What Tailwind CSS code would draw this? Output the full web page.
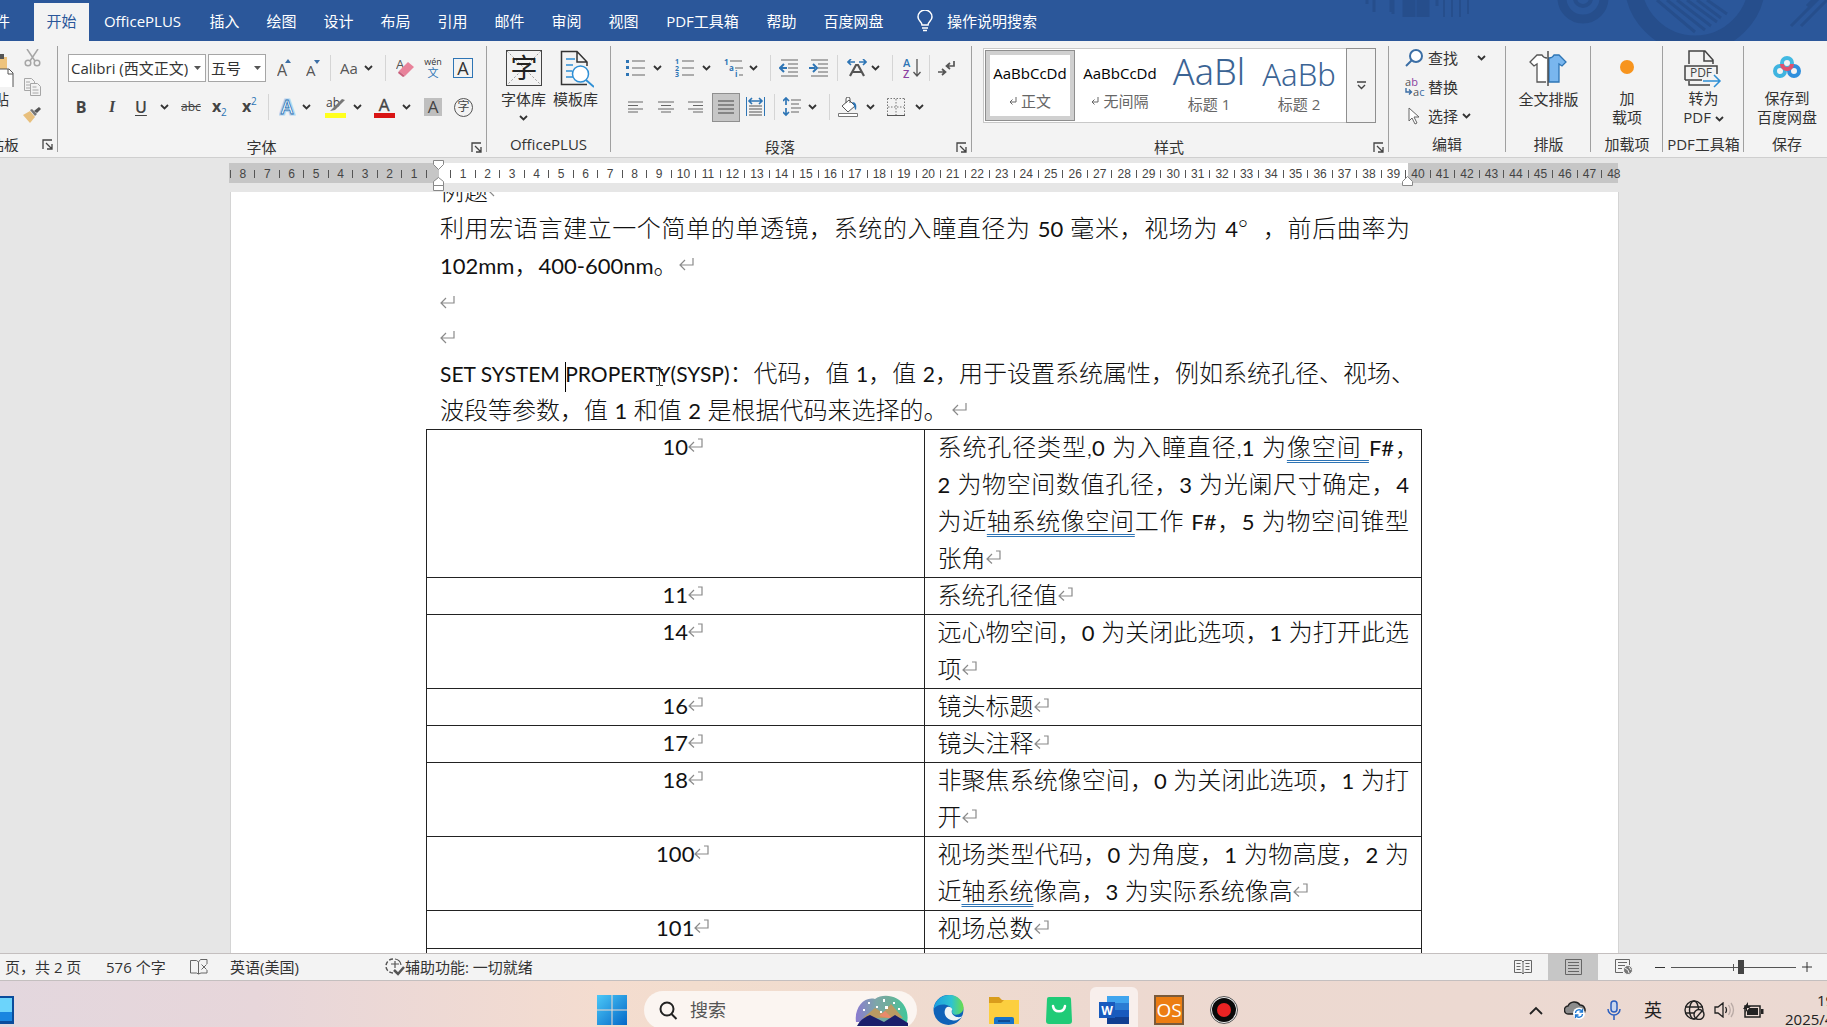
<!DOCTYPE html>
<html lang="zh-CN">
<head>
<meta charset="utf-8">
<title>Word</title>
<script src="https://cdn.jsdelivr.net/npm/@tailwindcss/browser@4"></script>
</head>
<body class="h-screen flex flex-col overflow-hidden bg-[#e6e6e6] font-['Open_Sans','Noto_Sans_CJK_SC',sans-serif] text-[15px] leading-5 text-[#333]">
<svg class="hidden">
  <symbol id="chev" viewBox="0 0 9 6"><path d="M1 1l3.5 3.5L8 1" fill="none" stroke="#333" stroke-width="1.8"/></symbol>
  <symbol id="launch" viewBox="0 0 11 11"><path d="M1 10V1h9M4 4l6 6M10 5v5H5" fill="none" stroke="#444" stroke-width="1.3"/></symbol>
  <symbol id="ret" viewBox="0 0 15 14"><path d="M14 1v7H1M6 3L1 8l5 5" fill="none" stroke="#8a8a8a" stroke-width="1.2"/></symbol>
  <symbol id="cellret" viewBox="0 0 15 14"><path d="M10 1h4v8H1M6 4L1 9l5 4.500" fill="none" stroke="#8a8a8a" stroke-width="1.2"/></symbol>
</svg>

<nav class="relative h-[41px] shrink-0 bg-[#2b579a] text-white flex items-end overflow-hidden">
  <svg class="absolute right-0 top-0" width="520" height="41" fill="none" stroke="#264e8c">
    <circle cx="276" cy="-2" r="21" stroke-width="9"/><circle cx="276" cy="-2" r="8" stroke-width="4"/>
    <circle cx="388" cy="-18" r="62" stroke-width="17"/>
    <path d="M350 0l38 32M360 0l38 30M370 0l34 26M380 0l30 22M390 0l24 18M400 0l20 14" stroke-width="3"/>
    <path d="M67 0v12M60 0v4M130 0v6M84 0v12M86 0v14" stroke-width="3"/><path d="M102 0v17M116 0v17" stroke-width="13"/>
    <path d="M137 0v17M145 0v17M153 0v17M161 0v14" stroke-width="2"/>
    <path d="M484 26l28-28M494 26l28-28M500 6l8-8" stroke-width="3"/>
  </svg>
  <a href="#" class="w-[34px] h-[38px] flex items-center justify-end pr-6 pb-[2px] whitespace-nowrap">文件</a>
  <a href="#" class="h-[38px] w-[55px] pb-[2px] flex items-center justify-center bg-[#f3f3f3] text-[#2b579a]">开始</a>
  <a href="#" class="h-[38px] w-[107px] pb-[2px] flex items-center justify-center">OfficePLUS</a>
  <a href="#" class="h-[38px] w-[57px] pb-[2px] flex items-center justify-center">插入</a>
  <a href="#" class="h-[38px] w-[57px] pb-[2px] flex items-center justify-center">绘图</a>
  <a href="#" class="h-[38px] w-[57px] pb-[2px] flex items-center justify-center">设计</a>
  <a href="#" class="h-[38px] w-[57px] pb-[2px] flex items-center justify-center">布局</a>
  <a href="#" class="h-[38px] w-[57px] pb-[2px] flex items-center justify-center">引用</a>
  <a href="#" class="h-[38px] w-[57px] pb-[2px] flex items-center justify-center">邮件</a>
  <a href="#" class="h-[38px] w-[57px] pb-[2px] flex items-center justify-center">审阅</a>
  <a href="#" class="h-[38px] w-[57px] pb-[2px] flex items-center justify-center">视图</a>
  <a href="#" class="h-[38px] w-[101px] pb-[2px] flex items-center justify-center">PDF工具箱</a>
  <a href="#" class="h-[38px] w-[57px] pb-[2px] flex items-center justify-center">帮助</a>
  <a href="#" class="h-[38px] w-[87px] pb-[2px] flex items-center justify-center">百度网盘</a>
  <a href="#" class="h-[38px] flex items-center pb-[2px] pl-5 gap-[14px]">
    <svg width="16" height="22" viewBox="0 0 16 22" fill="none" stroke="#fff" stroke-width="1.500"><path d="M5 15c0-3-4-4-4-8a7 7 0 0 1 14 0c0 4-4 5-4 8zM5 18h6M6 20.500h4"/></svg>操作说明搜索</a>
</nav>

<section class="h-[117px] shrink-0 bg-[#f3f3f3] border-b border-[#cfcfcf] flex py-[5px]">
  <!-- clipboard -->
  <div class="w-[58px] shrink-0 border-r border-[#a0a0a0] flex flex-col justify-between overflow-hidden">
    <div class="flex justify-between pr-4 pt-[3px]">
      <button class="w-[14px] flex flex-col items-end" aria-label="粘贴">
        <svg width="14" height="38" viewBox="0 0 14 38"><path d="M-8 8h15v24H-8z" fill="#eec37c"/><path d="M-2 5h6v5h-6z" fill="#555"/><path d="M-6 20H9l4 4v15H-6z" fill="#fff" stroke="#555"/><path d="M8 20v5h5" fill="none" stroke="#555"/></svg>
        <span class="mt-[2px] mr-[5px] whitespace-nowrap">粘贴</span>
      </button>
      <div class="flex flex-col items-center gap-[11px]">
        <svg width="17" height="18" viewBox="0 0 17 18" fill="none" stroke="#a6a6a6" stroke-width="1.500"><path d="M3 0l8 12M14 0L6 12"/><circle cx="4" cy="14" r="2.800"/><circle cx="13" cy="14" r="2.800"/></svg>
        <svg width="17" height="18" viewBox="0 0 17 18" fill="#f3f3f3" stroke="#a6a6a6"><path d="M.5.5h7l3 3v9H.5z"/><path d="M6.500 5.500h7l3 3v9h-10z"/><path d="M2 4h4M2 7h4M2 10h4M8.500 9h4M8.500 12h6M8.500 15h6"/></svg>
        <svg width="18" height="16" viewBox="0 0 18 16"><path d="M0 8l7-4 5 6-5 6z" fill="#e8bf7c"/><path d="M7 3l5 6 2-2-5-5z" fill="#777"/><path d="M11 4l5-4 2 2-4 4z" fill="#555"/></svg>
      </div>
    </div>
    <div class="flex items-center justify-between pr-1 h-[15px]"><span class="-ml-[26px] w-[46px] whitespace-nowrap">剪贴板</span><svg width="11" height="11"><use href="#launch"/></svg></div>
  </div>

  <!-- font -->
  <div class="w-[429px] shrink-0 border-r border-[#a0a0a0] flex flex-col">
    <div class="flex items-center h-7 mt-2 pl-[10px]">
      <div class="relative w-[138px] h-7"><select aria-label="字体" class="appearance-none w-full h-full border border-[#a6a6a6] bg-white pl-[2px] pr-[17px] text-[15px] overflow-hidden"><option>Calibri (西文正文)</option></select><svg class="absolute right-[5px] top-[12px]" width="7" height="4"><path d="M0 0h7L3.500 4z" fill="#555"/></svg></div>
      <div class="relative w-[58px] h-7 ml-[2px]"><select aria-label="字号" class="appearance-none w-full h-full border border-[#a6a6a6] bg-white pl-[2px] text-[15px]"><option>五号</option></select><svg class="absolute right-[5px] top-[12px]" width="7" height="4"><path d="M0 0h7L3.500 4z" fill="#555"/></svg></div>
      <button class="ml-[11px] w-[14px]" aria-label="增大字号"><svg width="14" height="18"><text x="0" y="17" font-size="16" fill="#555">A</text><path d="M8 4h6L11 0z" fill="#3b6ea5"/></svg></button>
      <button class="ml-[15px] w-[14px]" aria-label="减小字号"><svg width="14" height="18"><text x="0" y="17" font-size="15" fill="#555">A</text><path d="M8 1h6L11 5z" fill="#3b6ea5"/></svg></button>
      <i class="ml-[10px] w-px h-[26px] bg-[#d5d5d5]"></i>
      <button class="ml-[9px] w-[33px] flex items-center justify-between text-[#555]">Aa<svg width="9" height="6"><use href="#chev"/></svg></button>
      <i class="ml-3 w-px h-[26px] bg-[#d5d5d5]"></i>
      <button class="ml-[10px] w-[18px]" aria-label="清除格式"><svg width="18" height="20"><text x="0" y="11" font-size="13" fill="#555">A</text><path d="M3 13L12 4l6 5-9 9z" fill="#e8829a"/><path d="M3 13l6 5-2 1-5-4z" fill="#c95f7c"/></svg></button>
      <button class="ml-[10px] w-[18px]" aria-label="拼音指南"><svg width="18" height="20" class="overflow-visible"><text x="9" y="7" font-size="9" text-anchor="middle" fill="#333">wén</text><text x="9" y="19" font-size="11" text-anchor="middle" fill="#2e75b5">文</text></svg></button>
      <button class="ml-[11px] w-5 h-5 border border-[#2e75b5] text-[18px] leading-[18px] text-[#333] flex justify-center">A</button>
    </div>
    <div class="flex items-center h-7 mt-[11px] pl-[8px] text-[#444]">
      <button class="w-[30px] font-bold text-[16px]">B</button>
      <button class="w-8 font-bold italic text-[16px] font-['Liberation_Serif',serif]">I</button>
      <button class="ml-[7px] w-[34px] flex items-center justify-between"><span class="underline font-semibold text-[16px] underline-offset-2">U</span><svg width="9" height="6"><use href="#chev"/></svg></button>
      <button class="ml-[11px] w-[22px] line-through text-[12px]">abc</button>
      <button class="ml-[10px] w-4" aria-label="下标"><svg width="16" height="18"><text x="0" y="14" font-size="16" font-weight="700" fill="#444">x</text><text x="9" y="18" font-size="10" fill="#2e75b5">2</text></svg></button>
      <button class="ml-[14px] w-4" aria-label="上标"><svg width="16" height="20"><text x="0" y="15" font-size="16" font-weight="700" fill="#444">x</text><text x="9" y="8" font-size="10" fill="#2e75b5">2</text></svg></button>
      <i class="ml-[10px] w-px h-[26px] bg-[#d5d5d5]"></i>
      <button class="ml-[10px] w-8 flex items-center justify-between" aria-label="文本效果"><svg width="17" height="20"><text x="8" y="17" text-anchor="middle" font-size="19" font-weight="700" fill="#fff" stroke="#b5d5f0" stroke-width="3">A</text><text x="8" y="17" text-anchor="middle" font-size="19" font-weight="600" fill="#fff" stroke="#2e75b5" stroke-width=".8">A</text></svg><svg width="9" height="6"><use href="#chev"/></svg></button>
      <button class="ml-[14px] w-[37px] flex items-center justify-between" aria-label="突出显示"><svg width="21" height="21" class="overflow-visible"><text x="1" y="10" font-size="12" fill="#444">ab</text><path d="M5 14l3-3 9-9 3 1-10 10z" fill="#777"/><path d="M0 16h21v5H0z" fill="#ffff1e"/></svg><svg width="9" height="6"><use href="#chev"/></svg></button>
      <button class="ml-3 w-[37px] flex items-center justify-between" aria-label="字体颜色"><svg width="21" height="21" class="overflow-visible"><text x="10" y="14" text-anchor="middle" font-size="17" fill="#444" stroke="#444" stroke-width=".4">A</text><path d="M0 16h21v5H0z" fill="#d91414"/></svg><svg width="9" height="6"><use href="#chev"/></svg></button>
      <button class="ml-[13px] w-[18px] h-[18px] bg-[#bfbfbf] text-[17px] leading-[18px]">A</button>
      <button class="ml-3 w-[19px] h-[19px] rounded-full border border-[#555] text-[12px] leading-[16px]">字</button>
    </div>
    <div class="mt-auto grid grid-cols-[1fr_auto_1fr] items-center pr-1 -ml-[17px] h-[15px]"><i></i><span>字体</span><svg class="justify-self-end" width="11" height="11"><use href="#launch"/></svg></div>
  </div>

  <!-- OfficePLUS -->
  <div class="w-[124px] shrink-0 border-r border-[#a0a0a0] flex flex-col items-center">
    <div class="flex gap-[6px] pt-1 pl-[2px]">
      <button class="flex flex-col items-center w-[46px]"><svg width="36" height="36"><rect x=".5" y=".5" width="35" height="35" fill="none" stroke="#444"/><path d="M1 1l34 34M35 1L1 35" stroke="#999" stroke-dasharray="2 2"/><text x="18" y="28" text-anchor="middle" font-size="27" fill="#222">字</text></svg><span class="mt-[3px] leading-5">字体库</span><svg class="mt-[6px]" width="9" height="6"><use href="#chev"/></svg></button>
      <button class="flex flex-col items-center w-[46px]"><svg width="36" height="38" viewBox="0 0 36 38" fill="none"><path d="M29 34.500H3.500v-33H19L29 12v4M19 1.500V12h10" stroke="#333" stroke-width="1.500"/><path d="M8 9h9M8 15h7M8 21h6M8 27h7" stroke="#2e8fd5" stroke-width="1.400"/><circle cx="22.500" cy="24" r="8" fill="#fff" stroke="#2e8fd5" stroke-width="1.500"/><path d="M28 30l8 7" stroke="#2e8fd5" stroke-width="1.800"/></svg><span class="mt-px leading-5">模板库</span></button>
    </div>
    <span class="mt-auto leading-[15px]">OfficePLUS</span>
  </div>

  <!-- paragraph -->
  <div class="w-[361px] shrink-0 border-r border-[#a0a0a0] flex flex-col">
    <div class="flex items-center h-7 mt-2 pl-[15px]">
      <button class="w-9 flex items-center justify-between" aria-label="项目符号"><svg width="19" height="18"><path d="M6 2h13M6 9h13M6 16h13" stroke="#666" stroke-width="1.200"/><path d="M0 1h3v3H0zM0 7h3v3H0zM0 14h3v3H0z" fill="#2e75b5"/></svg><svg width="9" height="6"><use href="#chev"/></svg></button>
      <button class="ml-[13px] w-9 flex items-center justify-between" aria-label="编号"><svg width="19" height="18"><path d="M7 2h12M7 9h12M7 16h12" stroke="#666" stroke-width="1.200"/><g font-size="7" font-weight="700" fill="#2e75b5"><text x="0" y="5">1</text><text x="0" y="12">2</text><text x="0" y="18">3</text></g></svg><svg width="9" height="6"><use href="#chev"/></svg></button>
      <button class="ml-[13px] w-[34px] flex items-center justify-between" aria-label="多级列表"><svg width="20" height="18"><path d="M6 2h12M11 9h8M15 16h4" stroke="#666" stroke-width="1.200"/><g font-size="8" font-weight="700" fill="#2e75b5"><text x="0" y="6">1</text><text x="5" y="12">a</text><text x="11" y="18">i</text></g></svg><svg width="9" height="6"><use href="#chev"/></svg></button>
      <i class="ml-3 w-px h-[26px] bg-[#d5d5d5]"></i>
      <button class="ml-[8px]" aria-label="减少缩进"><svg width="19" height="18"><path d="M2 1h17M9 5h10M9 9h10M9 13h10M2 17h17" stroke="#666" stroke-width="1.200"/><path d="M8 9H2M5 5L1 9l4 4" stroke="#2e75b5" stroke-width="2" fill="none"/></svg></button>
      <button class="ml-[11px]" aria-label="增加缩进"><svg width="19" height="18"><path d="M2 1h17M9 5h10M9 9h10M9 13h10M2 17h17" stroke="#666" stroke-width="1.200"/><path d="M0 9h6M4 5l4 4-4 4" stroke="#2e75b5" stroke-width="2" fill="none"/></svg></button>
      <i class="ml-[9px] w-px h-[26px] bg-[#d5d5d5]"></i>
      <button class="ml-[9px] w-[33px] flex items-center justify-between" aria-label="中文版式"><svg width="20" height="18"><path d="M1 3h7M4 0L1 3l3 3M12 3h7M16 0l3 3-3 3" stroke="#2e75b5" stroke-width="1.600" fill="none"/><path d="M3 17L9 6h2l6 11M6 13h8" stroke="#555" stroke-width="2.200" fill="none"/></svg><svg width="9" height="6"><use href="#chev"/></svg></button>
      <i class="ml-3 w-px h-[26px] bg-[#d5d5d5]"></i>
      <button class="ml-[10px]" aria-label="排序"><svg width="18" height="20"><text x="0" y="9" font-size="11" font-weight="600" fill="#2e75b5">A</text><text x="0" y="20" font-size="11" font-weight="600" fill="#8a3fa0">Z</text><path d="M14 1v17M10.500 14l3.500 4 3.500-4" stroke="#555" stroke-width="1.300" fill="none"/></svg></button>
      <i class="ml-[8px] w-px h-[26px] bg-[#d5d5d5]"></i>
      <button class="ml-[8px]" aria-label="显示编辑标记"><svg width="17" height="16" fill="none" stroke="#555" stroke-width="1.700"><path d="M16 1v5H9M12 3L8.500 6 12 9M0 12h7M4 9l3.500 3L4 15"/></svg></button>
    </div>
    <div class="flex items-center h-7 mt-[11px] pl-[17px]">
      <button aria-label="左对齐"><svg width="15" height="12" stroke="#666" stroke-width="1.200"><path d="M0 1h15M0 4.500h10M0 8h15M0 11h10"/></svg></button>
      <button class="ml-[15px]" aria-label="居中"><svg width="16" height="12" stroke="#666" stroke-width="1.200"><path d="M0 1h16M3 4.500h10M0 8h16M3 11h10"/></svg></button>
      <button class="ml-[14px]" aria-label="右对齐"><svg width="15" height="12" stroke="#666" stroke-width="1.200"><path d="M0 1h15M5 4.500h10M0 8h15M5 11h10"/></svg></button>
      <button class="ml-[9px] w-7 h-[29px] bg-[#c6c6c6] border border-[#8f8f8f] flex items-center justify-center" aria-label="两端对齐"><svg width="16" height="14" stroke="#444" stroke-width="1.200"><path d="M0 1h16M0 5h16M0 9h16M0 13h16"/></svg></button>
      <button class="ml-[6px]" aria-label="分散对齐"><svg width="19" height="20"><path d="M.5 0v19M18.500 0v19" stroke="#2e75b5"/><path d="M3 4h13M6 1L3 4l3 3M13 1l3 3-3 3" stroke="#2e75b5" stroke-width="1.600" fill="none"/><path d="M3 9h13M3 12h13M3 15h13M3 18h13" stroke="#555" stroke-width="1.200"/></svg></button>
      <i class="ml-[9px] w-px h-[26px] bg-[#d5d5d5]"></i>
      <button class="ml-[8px] w-[34px] flex items-center justify-between" aria-label="行距"><svg width="18" height="20"><path d="M8 3h10M8 7h8M8 11h10M8 15h8" stroke="#666" stroke-width="1.200"/><path d="M3 2v6M0 4l3-3 3 3M3 11v7M0 15l3 3 3-3" stroke="#2e75b5" stroke-width="1.700" fill="none"/></svg><svg width="9" height="6"><use href="#chev"/></svg></button>
      <i class="ml-3 w-px h-[26px] bg-[#d5d5d5]"></i>
      <button class="ml-[8px] w-[37px] flex items-center justify-between" aria-label="底纹"><svg width="20" height="20"><path d="M4 9l7-6 6 6-7 6zM8 6V2a2 2 0 0 1 4 0v4" fill="#fff" stroke="#555"/><path d="M14 5c4 0 5 3 4 8-2-1-1-4-4-8z" fill="#2e75b5"/><path d="M.5 16.500h19v3H.5z" fill="#fff" stroke="#777"/></svg><svg width="9" height="6"><use href="#chev"/></svg></button>
      <button class="ml-[12px] w-[37px] flex items-center justify-between" aria-label="边框"><svg width="18" height="18" stroke="#777" fill="none"><path d="M.5.5h17M17.500.5v17M.5.5v17M9 1v16M1 9h16" stroke-dasharray="1.500 1.500"/><path d="M0 17.500h18" stroke="#555"/></svg><svg width="9" height="6"><use href="#chev"/></svg></button>
    </div>
    <div class="mt-auto grid grid-cols-[1fr_auto_1fr] items-center pr-1 -ml-[18px] h-[15px]"><i></i><span>段落</span><svg class="justify-self-end" width="11" height="11"><use href="#launch"/></svg></div>
  </div>

  <!-- styles -->
  <div class="flex-1 min-w-0 border-r border-[#a0a0a0] flex flex-col">
    <div class="mt-[2px] ml-[11px] mr-3 h-[75px] border border-[#c8c8c8] bg-white flex">
      <button class="m-px w-[90px] shrink-0 border border-[#8f8f8f] bg-[#d0d0d0] p-1"><span class="bg-white h-full flex flex-col items-center justify-center gap-2 pt-[2px]"><span class="text-[15px] leading-5 text-black">AaBbCcDd</span><span class="text-[#666] leading-5 flex items-center gap-1"><svg width="8" height="8" fill="none" stroke="#666"><path d="M7 0v5H1M3.500 2.500L1 5l2.500 2.500"/></svg>正文</span></span></button>
      <button class="w-[88px] shrink-0 flex flex-col items-center justify-center gap-2 pt-[2px]"><span class="text-[15px] leading-5 text-black">AaBbCcDd</span><span class="text-[#666] leading-5 flex items-center gap-1"><svg width="8" height="8" fill="none" stroke="#666"><path d="M7 0v5H1M3.500 2.500L1 5l2.500 2.500"/></svg>无间隔</span></button>
      <button class="w-[90px] flex flex-col items-center justify-end pb-2 gap-1"><span class="w-[77px] overflow-hidden whitespace-nowrap text-[36px] leading-9 -mt-2 text-[#3b6494] font-['Noto_Sans',sans-serif] font-light">AaBl</span><span class="text-[#666] leading-5">标题 1</span></button>
      <button class="w-[90px] flex flex-col items-center justify-end pb-2 gap-1"><span class="w-[76px] whitespace-nowrap text-[31px] leading-8 text-[#3b6494] font-['Noto_Sans',sans-serif] font-light">AaBb</span><span class="text-[#666] leading-5">标题 2</span></button>
      <button class="ml-auto -my-px -mr-px w-[30px] border border-[#8f8f8f] bg-[#f3f3f3] flex items-center justify-center" aria-label="更多样式"><svg width="9" height="9" fill="none" stroke="#444" stroke-width="1.400"><path d="M0 1h9M1 4l3.500 3.500L8 4"/></svg></button>
    </div>
    <div class="mt-auto grid grid-cols-[1fr_auto_1fr] items-center pr-1 -ml-[18px] h-[15px]"><i></i><span>样式</span><svg class="justify-self-end" width="11" height="11"><use href="#launch"/></svg></div>
  </div>

  <!-- editing -->
  <div class="w-[117px] shrink-0 border-r border-[#a0a0a0] flex flex-col">
    <div class="flex flex-col gap-[9px] pl-4 pt-[2px]">
      <button class="flex items-center h-5"><svg width="18" height="18" fill="#fff" stroke="#3b6ea5" stroke-width="2"><path d="M1 17l6-6"/><circle cx="11" cy="7" r="6"/></svg><span class="ml-[5px]">查找</span><svg class="ml-[19px]" width="9" height="6"><use href="#chev"/></svg></button>
      <button class="flex items-center h-5"><svg width="19" height="19" class="overflow-visible"><text x="0" y="8" font-size="11" fill="#555">a<tspan fill="#8a3fa0">b</tspan></text><text x="8" y="18" font-size="11" fill="#555">a<tspan fill="#3b6ea5">c</tspan></text><path d="M1 10v4h5M4 11.500l2.500 2.500L4 16.500" fill="none" stroke="#3b6ea5" stroke-width="1.400"/></svg><span class="ml-1">替换</span></button>
      <button class="flex items-center h-5"><svg width="18" height="18" fill="#fff" stroke="#666"><path d="M4 1v13l3-3 3 6 2-1-3-6h5z"/></svg><span class="ml-[5px]">选择</span><svg class="ml-1" width="9" height="6"><use href="#chev"/></svg></button>
    </div>
    <span class="mt-auto text-center leading-[15px]">编辑</span>
  </div>

  <!-- typesetting -->
  <div class="w-[85px] shrink-0 border-r border-[#a0a0a0] flex flex-col items-center pl-px">
    <button class="flex flex-col items-center pt-1"><svg width="38" height="36" viewBox="0 0 38 36" stroke-width="1.300"><path d="M18 8c-3 0-4-1-5-3L8 5 1 12l4 4 3-2v18h9" fill="#fff" stroke="#555"/><path d="M20 8c3 0 4-1 5-3l5 0 7 7-4 4-3-2v18H20z" fill="#79b6ee" stroke="#2e75b5"/><path d="M19 1v35" stroke="#333"/></svg><span class="mt-[3px]">全文排版</span></button>
    <span class="mt-auto leading-[15px]">排版</span>
  </div>
  <!-- add-ins -->
  <div class="w-[72px] shrink-0 border-r border-[#a0a0a0] flex flex-col items-center pl-px">
    <button class="flex flex-col items-center pt-[14px]"><i class="w-[14px] h-[14px] rounded-full bg-[#f7941d]"></i><span class="mt-[15px] leading-[19px]">加<br>载项</span></button>
    <span class="mt-auto leading-[15px]">加载项</span>
  </div>
  <!-- PDF -->
  <div class="w-[81px] shrink-0 border-r border-[#a0a0a0] flex flex-col items-center pl-px">
    <button class="flex flex-col items-center pt-1"><svg width="38" height="38" viewBox="0 0 38 38" fill="none" stroke="#444" stroke-width="1.500"><path d="M5 14V1h16l8 9v4M20 1v10h9M1 30V16h32v8M1 30h17M5 31v4h21"/><text x="17" y="27" text-anchor="middle" font-size="12" fill="#444" stroke="none">PDF</text><path d="M19 31h17M30 25l6 6-6 6" stroke="#2e8fd5"/></svg><span class="mt-px leading-[19px]">转为<br>PDF <svg class="inline" width="9" height="6"><use href="#chev"/></svg></span></button>
    <span class="mt-auto leading-[15px]">PDF工具箱</span>
  </div>
  <!-- netdisk -->
  <div class="w-[83px] shrink-0 flex flex-col items-center pl-[3px]">
    <button class="flex flex-col items-center pt-[10px]"><svg width="28" height="23" viewBox="0 0 28 23" fill="none" stroke-width="4"><circle cx="7" cy="15" r="5" stroke="#3fb4e0"/><circle cx="21" cy="15" r="5" stroke="#2f8fdd"/><circle cx="14" cy="7" r="5" stroke="#42b9e2"/><path d="M9 8a5 5 0 0 0 10 0" stroke="#e0526e"/></svg><span class="mt-[10px] leading-[19px]">保存到<br>百度网盘</span></button>
    <span class="mt-auto leading-[15px]">保存</span>
  </div>
</section>

<!-- ruler -->
<div class="relative h-[34px] shrink-0 grid pt-[5px] pb-[9px]">
  <div class="col-start-1 row-start-1 flex pl-[229px] pr-[209px]"><i class="w-[210px] bg-[#c6c6c6]"></i><i class="flex-1 bg-white"></i><i class="w-[210px] bg-[#c6c6c6]"></i></div>
  <div id="ruler" class="col-start-1 row-start-1 flex items-center pt-[2px] pl-[230px] pr-[201px] text-[12px] leading-4 text-[#444] font-['Liberation_Sans',sans-serif]"></div>
  <svg class="absolute left-[433px] top-[2px]" width="12" height="32" fill="#fff" stroke="#888"><path d="M.5.5h10v4l-5 5-5-5zM5.500 17.500l5 4v4H.5v-4zM.5 25.500h10v5H.5z"/></svg>
  <svg class="absolute right-[413px] top-[18px]" width="12" height="11" fill="#fff" stroke="#888"><path d="M5.500.5l5 5v4H.5v-4z"/></svg>
</div>

<!-- document -->
<main class="flex-1 min-h-0 overflow-hidden pl-[230px] pr-[208px]">
  <article class="h-full overflow-hidden bg-white pl-[210px] pr-[209px] border-l border-r border-[#d4d4d4] text-[24px] leading-[35px] text-[#111] font-light font-['Lato','Noto_Sans_CJK_SC',sans-serif]">
    <div class="-mt-[19px] -ml-px -mr-px">
      <p class="h-[37px]">例题<svg class="inline align-[3px]" width="15" height="14"><use href="#ret"/></svg></p>
      <p class="h-[37px] whitespace-nowrap [text-align-last:justify]">利用宏语言建立一个简单的单透镜，系统的入瞳直径为 <span class="text-[22px] font-normal">50</span> 毫米，视场为 <span class="text-[22px] font-normal">4</span><span class="mr-2">°</span> ，前后曲率为</p>
      <p class="h-[37px]"><span class="text-[22px] font-normal">102mm</span>，<span class="text-[22px] font-normal">400-600nm</span>。<svg class="inline align-[3px] ml-px" width="15" height="14"><use href="#ret"/></svg></p>
      <p class="h-[35px] flex items-center"><svg width="15" height="14"><use href="#ret"/></svg></p>
      <p class="h-[36px] flex items-center"><svg width="15" height="14"><use href="#ret"/></svg></p>
      <p class="h-[37px] whitespace-nowrap relative"><span class="text-[21px] font-normal">SET SYSTEM <i class="inline-block w-px h-[30px] -mr-px bg-black align-middle"></i>PROPERTY(SYSP)</span>：代码，值 <span class="text-[21px] font-normal">1</span>，值 <span class="text-[21px] font-normal">2</span>，用于设置系统属性，例如系统孔径、视场、<svg class="absolute left-[215px] top-[14px]" width="9" height="17" fill="none" stroke="#333"><path d="M1 .5h3l.5 1 .5-1h3M4.500 1v15M1 16.500h3l.5-1 .5 1h3"/></svg></p>
      <p class="h-[37px]">波段等参数，值 <span class="text-[22px] font-normal">1</span> 和值 <span class="text-[22px] font-normal">2</span> 是根据代码来选择的。<svg class="inline align-[3px] ml-1" width="15" height="14"><use href="#ret"/></svg></p>
      <table class="-ml-[14px] w-[calc(100%+26px)] table-fixed border-separate border-spacing-0 border-l border-[#222] [&_td]:align-top [&_td]:p-0 [&_td]:border-r [&_td]:border-[#222] [&_td]:shadow-[inset_0_1px_0_#222] [&_td:first-child]:text-center [&_td:first-child]:text-[22px] [&_td:first-child]:font-normal [&_td:last-child]:pl-[13px] [&_td:last-child]:pr-3 [&_p]:whitespace-nowrap [&_p]:h-[37px]">
        <tr><td>10<svg class="inline align-[3px] -mr-[15px]" width="15" height="14"><use href="#cellret"/></svg></td><td>
          <p class="[text-align-last:justify] -mr-[10px]">系统孔径类型,<span class="text-[22px] font-normal">0</span> 为入瞳直径,<span class="text-[22px] font-normal">1</span> 为<span class="underline decoration-double decoration-1 decoration-[#2e74b5] underline-offset-4">像空间 </span><span class="text-[22px] font-normal">F#</span>，</p>
          <p class="[text-align-last:justify]"><span class="text-[22px] font-normal">2</span> 为物空间数值孔径，<span class="text-[22px] font-normal">3</span> 为光阑尺寸确定，<span class="text-[22px] font-normal">4</span></p>
          <p class="[text-align-last:justify]">为近<span class="underline decoration-double decoration-1 decoration-[#2e74b5] underline-offset-4">轴系统像空间</span>工作 <span class="text-[22px] font-normal">F#</span>，<span class="text-[22px] font-normal">5</span> 为物空间锥型</p>
          <p>张角<svg class="inline align-[3px]" width="15" height="14"><use href="#cellret"/></svg></p></td></tr>
        <tr><td>11<svg class="inline align-[3px] -mr-[15px]" width="15" height="14"><use href="#cellret"/></svg></td><td><p>系统孔径值<svg class="inline align-[3px]" width="15" height="14"><use href="#cellret"/></svg></p></td></tr>
        <tr><td>14<svg class="inline align-[3px] -mr-[15px]" width="15" height="14"><use href="#cellret"/></svg></td><td>
          <p class="[text-align-last:justify]">远心物空间，<span class="text-[22px] font-normal">0</span> 为关闭此选项，<span class="text-[22px] font-normal">1</span> 为打开此选</p>
          <p>项<svg class="inline align-[3px]" width="15" height="14"><use href="#cellret"/></svg></p></td></tr>
        <tr><td>16<svg class="inline align-[3px] -mr-[15px]" width="15" height="14"><use href="#cellret"/></svg></td><td><p>镜头标题<svg class="inline align-[3px]" width="15" height="14"><use href="#cellret"/></svg></p></td></tr>
        <tr><td>17<svg class="inline align-[3px] -mr-[15px]" width="15" height="14"><use href="#cellret"/></svg></td><td><p>镜头注释<svg class="inline align-[3px]" width="15" height="14"><use href="#cellret"/></svg></p></td></tr>
        <tr><td>18<svg class="inline align-[3px] -mr-[15px]" width="15" height="14"><use href="#cellret"/></svg></td><td>
          <p class="[text-align-last:justify]">非聚焦系统像空间，<span class="text-[22px] font-normal">0</span> 为关闭此选项，<span class="text-[22px] font-normal">1</span> 为打</p>
          <p>开<svg class="inline align-[3px]" width="15" height="14"><use href="#cellret"/></svg></p></td></tr>
        <tr><td>100<svg class="inline align-[3px] -mr-[15px]" width="15" height="14"><use href="#cellret"/></svg></td><td>
          <p class="[text-align-last:justify]">视场类型代码，<span class="text-[22px] font-normal">0</span> 为角度，<span class="text-[22px] font-normal">1</span> 为物高度，<span class="text-[22px] font-normal">2</span> 为</p>
          <p>近<span class="underline decoration-double decoration-1 decoration-[#2e74b5] underline-offset-4">轴系统</span>像高，<span class="text-[22px] font-normal">3</span> 为实际系统像高<svg class="inline align-[3px]" width="15" height="14"><use href="#cellret"/></svg></p></td></tr>
        <tr class="h-[38px]"><td>101<svg class="inline align-[3px] -mr-[15px]" width="15" height="14"><use href="#cellret"/></svg></td><td><p>视场总数<svg class="inline align-[3px]" width="15" height="14"><use href="#cellret"/></svg></p></td></tr>
        <tr class="h-[37px]"><td></td><td></td></tr>
      </table>
    </div>
  </article>
</main>

<!-- status bar -->
<footer class="h-7 shrink-0 border-t border-b border-[#c4bfbf] bg-[#f3f3f3] flex items-center whitespace-nowrap">
  <span class="pl-[5px] w-[106px]">页，共 2 页</span>
  <span class="w-[84px]">576 个字</span>
  <svg width="18" height="16" viewBox="0 0 18 16" fill="none" stroke="#666"><path d="M.5 1.500h6l2 1.500v12l-2-1H.5zM8.500 3l2-2.500h6.500V5M17 11v3h-6l-2.500 1M11.500 5.500l5 5M16.500 5.500l-5 5"/></svg>
  <span class="ml-[22px] w-[155px]">英语(美国)</span>
  <svg width="20" height="18" viewBox="0 0 20 18" fill="none" stroke="#555" stroke-width="1.500"><path d="M8 1a7 7 0 0 0 0 14" stroke-dasharray="4 2"/><path d="M10 1a7 7 0 0 1 6 6M6 6h8M10 3v7" stroke-width="1.200"/><path d="M9 12l4 4 6-7" stroke-width="2.500"/></svg>
  <span>辅助功能: 一切就绪</span>
  <div class="ml-auto h-full flex items-center">
    <svg class="mr-4" width="18" height="16" viewBox="0 0 18 16" fill="none" stroke="#666"><path d="M.5 1.500h7L9 3l1.500-1.500h7v12h-7L9 15l-1.500-1.500h-7zM9 3v12M2.500 4.500h4M2.500 7.500h4M2.500 10.500h4M11.500 4.500h4M11.500 7.500h4M11.500 10.500h4"/></svg>
    <button class="w-[50px] h-full bg-[#c6c6c6] flex items-center justify-center" aria-label="页面视图"><svg width="17" height="16" fill="none" stroke="#666"><path d="M.5.5h16v15H.5zM3 3.500h11M3 6.500h11M3 9.500h11M3 12.500h11"/></svg></button>
    <svg class="ml-[17px] mr-[22px]" width="18" height="16" viewBox="0 0 18 16" fill="none" stroke="#666"><path d="M8 13.500H.5V.5h14V6M3 3.500h9M3 6.500h7M3 9.500h4"/><circle cx="13" cy="11" r="4.500" fill="#777" stroke="#f3f3f3"/><path d="M10 9l3 2 1 3M14 8l2 3" stroke="#eee"/></svg>
    <button class="w-[10px] h-5 flex items-center" aria-label="缩小"><i class="w-[10px] h-px bg-[#333]"></i></button>
    <div class="relative ml-[6px] w-[125px] h-4 flex items-center"><i class="absolute inset-x-0 top-2 h-px bg-[#555]"></i><i class="absolute left-[62px] top-[5px] h-[7px] w-px bg-[#555]"></i>
      <input type="range" aria-label="缩放" min="0" max="100" value="56" class="relative w-full h-4 appearance-none bg-transparent [&::-webkit-slider-thumb]:appearance-none [&::-webkit-slider-thumb]:w-[6px] [&::-webkit-slider-thumb]:h-[14px] [&::-webkit-slider-thumb]:bg-[#444]"></div>
    <button class="ml-[6px] mr-[15px] w-[10px] h-5" aria-label="放大"><svg width="10" height="10" stroke="#333"><path d="M0 5h10M5 0v10"/></svg></button>
  </div>
</footer>

<!-- taskbar -->
<div class="relative h-[46px] shrink-0 overflow-hidden bg-[linear-gradient(90deg,#e3d7de_0%,#e7d6da_14%,#f4dccf_33%,#f2ddce_38%,#edd9d0_60%,#ebd9d2_100%)] flex items-center text-[#222]">
  <svg class="absolute left-0 top-[15px]" width="14" height="28"><path d="M0 0h14v28H0z" fill="#0a4c9c"/><path d="M0 2h12v14H0z" fill="#6cd4fb"/><path d="M0 16h12v9H0z" fill="#1a86e0"/></svg>
  <div class="pl-[597px] flex items-center h-full pt-3">
    <svg width="30" height="30"><defs><linearGradient id="w" x2="1" y2="1"><stop stop-color="#4cc8f7"/><stop offset="1" stop-color="#0468c8"/></linearGradient></defs><path d="M0 0h14.500v14.500H0zM15.500 0H30v14.500H15.500zM0 15.500h14.500V30H0zM15.500 15.500H30V30H15.500z" fill="url(#w)"/></svg>
    <label class="ml-[17px] w-[273px] h-[38px] rounded-full bg-[#fbf5f1] flex items-center pl-[15px] pr-2">
      <svg width="19" height="19" fill="none" stroke="#222" stroke-width="2"><circle cx="8" cy="8" r="6.500"/><path d="M12.500 13l5 5"/></svg>
      <input type="text" placeholder="搜索" aria-label="搜索" class="ml-3 w-[120px] text-[18px] bg-transparent placeholder:text-[#555]">
      <svg class="ml-auto" width="54" height="32" viewBox="0 0 54 32"><defs><linearGradient id="g" x2="1"><stop stop-color="#8a7ad0"/><stop offset=".4" stop-color="#7da7a8"/><stop offset=".65" stop-color="#6fae9a"/><stop offset="1" stop-color="#3fc79c"/></linearGradient></defs><path d="M1 28C-1 14 9 2 20 5c8-6 24-4 30 8 3 6 3 12 2 15z" fill="url(#g)"/><path d="M8 24l12-10 8 5 8-9 12 14z" fill="#b99a63"/><path d="M24 22l6-5 8 8z" fill="#e98a6b"/><path d="M2 32c3-6 8-9 13-11l14 7 11-7 13 8v3z" fill="#1b1f6b"/><path d="M13 8h2v2h-2zM21 12h2v2h-2zM28 5h2v3h-2zM30 12h3v3h-3zM38 8h2v2h-2zM43 14h2v2h-2zM25 17h2v2h-2zM8 15h2v2H8z" fill="#fff"/></svg>
    </label>
    <svg class="ml-4" width="31" height="30" viewBox="0 0 32 32"><defs><linearGradient id="e" x2="1"><stop stop-color="#1b9de2"/><stop offset=".6" stop-color="#2fc3d0"/><stop offset="1" stop-color="#6ade4a"/></linearGradient></defs><circle cx="16" cy="16" r="16" fill="#0f62b8"/><path d="M0 15C2 4 10 0 17 0c9 0 15 7 15 13 0 5-4 8-8 8-3 0-5-2-4-4 0-7-14-10-20-2z" fill="url(#e)"/><path d="M13 14c-3 5 0 12 7 13 4 1 8-1 11-4-1 0-5 2-9-1-3-2-3-4-2-7-2-3-5-3-7-1z" fill="#eef4f6"/></svg>
    <svg class="ml-[25px]" width="30" height="27" viewBox="0 0 30 27"><path d="M0 0h10l3 3h17v24H0z" fill="#d99d1c"/><path d="M0 6h12l3-3h15v24H0z" fill="#fccf3f"/><path d="M5 27v-5q0-2 2-2h16q2 0 2 2v5z" fill="#1673c9"/><path d="M9 23h12v2H9z" fill="#0c4b94"/></svg>
    <svg class="ml-[27px]" width="26" height="27" viewBox="0 0 26 27"><path d="M3 0h20q2 0 2 2l1 22q0 3-3 3H3q-3 0-3-3L1 2q0-2 2-2z" fill="#1fcb77"/><path d="M7 9c1 7 11 7 12 0" fill="none" stroke="#fff" stroke-width="2.500" stroke-linecap="round"/></svg>
    <span class="ml-[18px] w-12 h-[46px] rounded-md bg-[#f8efec] flex items-center justify-center"><svg width="30" height="28" viewBox="0 0 30 28"><path d="M8 0h22v28H8z" fill="#2b7cd3"/><path d="M8 0h22v7H8z" fill="#41a5ee"/><path d="M8 14h22v7H8z" fill="#185abd"/><path d="M8 21h22v7H8z" fill="#103f91"/><path d="M0 6h16v16H0z" fill="#185abd"/><text x="8" y="18.500" text-anchor="middle" font-size="12" font-weight="700" fill="#fff">W</text></svg></span>
    <span class="ml-4 w-[30px] h-[30px] bg-[#ec7d12] border-2 border-[#7a5a3a] text-white text-[19px] leading-[26px] flex justify-center">OS</span>
    <svg class="ml-[26px]" width="28" height="28"><circle cx="14" cy="14" r="13.500" fill="#eee" stroke="#555"/><circle cx="14" cy="14" r="12" fill="#0a0a0a"/><circle cx="14" cy="14" r="7" fill="#ea2323"/></svg>
  </div>
  <div class="ml-auto flex items-center h-full pt-3">
    <svg width="14" height="9" fill="none" stroke="#222" stroke-width="1.800"><path d="M1 8l6-6 6 6"/></svg>
    <svg class="ml-[21px]" width="22" height="20" viewBox="0 0 22 20"><path d="M5 14a4 4 0 0 1-1-8 7 7 0 0 1 12-1 5 5 0 0 1 3 9z" fill="#8c8c8c" stroke="#222" stroke-width="1.500"/><circle cx="15" cy="13.500" r="6" fill="#fff"/><path d="M11.500 13a3.500 3.500 0 0 1 6.500-1.500M18.500 14a3.500 3.500 0 0 1-6.500 1.500M18.500 9v3h-3M11.500 18v-3h3" fill="none" stroke="#1f78d1" stroke-width="1.300"/></svg>
    <svg class="ml-[21px]" width="14" height="20" fill="none" stroke="#2b5fc0" stroke-width="1.500"><rect x="4" y="1" width="6" height="11" rx="3" fill="#c9d6ee"/><path d="M1 9a6 6 0 0 0 12 0M7 15v5"/></svg>
    <span class="ml-[23px] text-[18px]">英</span>
    <svg class="ml-[22px]" width="21" height="20" fill="none" stroke="#222" stroke-width="1.400"><circle cx="10" cy="10" r="9"/><ellipse cx="10" cy="10" rx="4.500" ry="9"/><path d="M1 7h18M1 13h10"/><circle cx="15" cy="14.500" r="5" fill="#ebd9d2"/><path d="M12 18l6-7"/></svg>
    <svg class="ml-[9px]" width="21" height="16" fill="none" stroke="#222" stroke-width="1.300"><path d="M1 5h3l5-4v14l-5-4H1zM11.500 5q2 3 0 6"/><path d="M14.500 3q3.500 5 0 10M17 1q5 7 0 14" stroke="#b9aaa5"/></svg>
    <svg class="ml-2" width="21" height="16"><path d="M2 4h15v11H2z" fill="none" stroke="#222" stroke-width="1.500"/><path d="M4 6h11v7H4zM18 7h2.500v5H18zM5 0L0 7h3l-1 4 6-7H5z" fill="#222"/></svg>
    <div class="ml-[21px] w-[42px] h-[38px] overflow-hidden whitespace-nowrap text-[15px] leading-[19px] text-[#222]"><div class="pl-[32px]">19</div><div>2025/4</div></div>
  </div>
</div>

<script>
const ruler = document.getElementById('ruler');
for (let n = -8; n <= 48; n++) {
  const cell = document.createElement('span');
  cell.className = 'flex-1 basis-0 min-w-0 flex items-center';
  cell.innerHTML = '<i class="w-px h-2 bg-[#555]"></i><b class="flex-1 basis-0 text-center font-normal">' + (n ? Math.abs(n) : '') + '</b>';
  ruler.append(cell);
}
</script>
</body>
</html>
